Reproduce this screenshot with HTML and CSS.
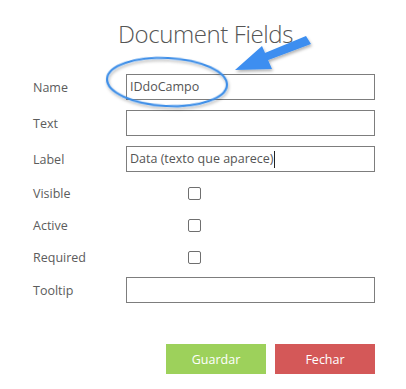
FILE: index.html
```html
<!DOCTYPE html>
<html lang="pt">
<head>
  <meta charset="UTF-8">
  <title>Document Fields</title>
  <link rel="stylesheet" href="styles.css">
</head>
<body>
  <div class="panel">
    <h1 class="title">Document Fields</h1>

    <div class="form">
      <div class="row">
        <label>Name</label>
        <div class="field">IDdoCampo</div>
      </div>
      <div class="row">
        <label>Text</label>
        <div class="field"></div>
      </div>
      <div class="row">
        <label>Label</label>
        <div class="field">Data (texto que aparece)<span class="caret"></span></div>
      </div>
      <div class="row check">
        <label>Visible</label>
        <span class="box"></span>
      </div>
      <div class="row check">
        <label>Active</label>
        <span class="box"></span>
      </div>
      <div class="row check">
        <label>Required</label>
        <span class="box"></span>
      </div>
      <div class="row tip">
        <label>Tooltip</label>
        <div class="field"></div>
      </div>
    </div>

    <div class="actions">
      <button class="btn guardar">Guardar</button>
      <button class="btn fechar">Fechar</button>
    </div>

    <svg class="note" width="406" height="389" viewBox="0 0 406 389">
      <defs>
        <filter id="sh" x="-20%" y="-20%" width="140%" height="140%">
          <feDropShadow dx="1" dy="2" stdDeviation="1.5" flood-color="#000" flood-opacity="0.3"/>
        </filter>
      </defs>
      <ellipse cx="167" cy="82" rx="60" ry="24" transform="rotate(3 167 82)" fill="none" stroke="#3c8ee8" stroke-width="2.2" filter="url(#sh)"/>
      <g filter="url(#sh)" fill="#3c8ef0">
        <polygon points="306,36 311,44 263,62 260,55"/>
        <polygon points="235,70 262,46 272,69"/>
      </g>
    </svg>
  </div>
</body>
</html>
```

FILE: styles.css
```css
body {
  margin: 0;
  background: #fff;
  font-family: 'Open Sans', 'Noto Sans', sans-serif;
  color: #555;
}
.panel {
  position: relative;
  width: 406px;
  height: 389px;
  overflow: hidden;
}
.title {
  margin: 0;
  padding-top: 17px;
  padding-left: 118px;
  font-size: 24px;
  font-weight: 300;
  line-height: 34px;
  color: #555;
  letter-spacing: -0.4px;
}
.form {
  margin-top: 18px;
  padding-left: 33px;
}
.row {
  display: flex;
  align-items: center;
  height: 36px;
}
.row.check {
  height: 32px;
}
.row.tip {
  height: 34px;
}
.row label {
  width: 93px;
  font-size: 12.5px;
  color: #5c5c5c;
}
.field {
  width: 244px;
  height: 24px;
  border: 1px solid #7d7d7d;
  font-size: 12.5px;
  line-height: 24px;
  padding-left: 3px;
  box-sizing: content-box;
  color: #555;
}
.caret {
  display: inline-block;
  width: 1px;
  height: 17px;
  background: #222;
  vertical-align: middle;
}
.box {
  margin-left: 62px;
  width: 11px;
  height: 11px;
  border: 1px solid #6f6f6f;
  border-radius: 2px;
}
.actions {
  display: flex;
  gap: 9px;
  margin-top: 37px;
  padding-left: 166px;
}
.btn {
  width: 100px;
  height: 30px;
  border: none;
  color: #fff;
  font-family: 'Open Sans', 'Noto Sans', sans-serif;
  font-size: 12.5px;
  padding: 0;
}
.guardar {
  background: #9dd15b;
}
.fechar {
  background: #d45858;
}
.note {
  position: absolute;
  left: 0;
  top: 0;
  pointer-events: none;
}
```
